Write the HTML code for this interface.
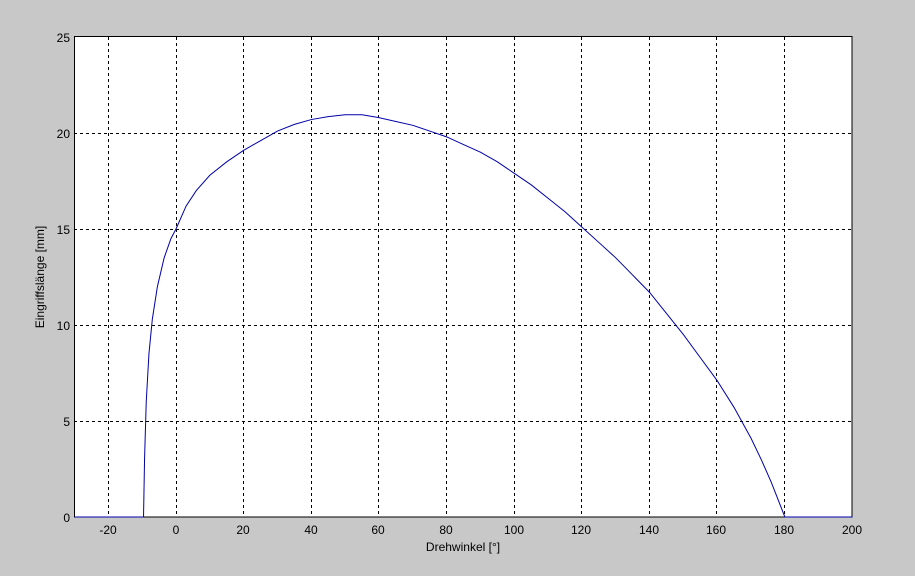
<!DOCTYPE html>
<html><head><style>
html,body{margin:0;padding:0;background:#c8c8c8;}
svg{display:block;}
text{font-family:"Liberation Sans",Arial,sans-serif;font-size:12px;fill:#000;}
</style></head><body>
<svg width="915" height="576" viewBox="0 0 915 576" xmlns="http://www.w3.org/2000/svg">
<rect x="0" y="0" width="915" height="576" fill="#c8c8c8"/>
<rect x="74" y="37" width="778" height="480" fill="#fff"/>
<g stroke="#000" stroke-width="1" stroke-dasharray="3,3" fill="none">
<line x1="108.5" y1="37" x2="108.5" y2="517"/>
<line x1="176.5" y1="37" x2="176.5" y2="517"/>
<line x1="243.5" y1="37" x2="243.5" y2="517"/>
<line x1="311.5" y1="37" x2="311.5" y2="517"/>
<line x1="378.5" y1="37" x2="378.5" y2="517"/>
<line x1="446.5" y1="37" x2="446.5" y2="517"/>
<line x1="514.5" y1="37" x2="514.5" y2="517"/>
<line x1="581.5" y1="37" x2="581.5" y2="517"/>
<line x1="649.5" y1="37" x2="649.5" y2="517"/>
<line x1="716.5" y1="37" x2="716.5" y2="517"/>
<line x1="784.5" y1="37" x2="784.5" y2="517"/>
<line x1="74" y1="421.5" x2="852" y2="421.5"/>
<line x1="74" y1="325.5" x2="852" y2="325.5"/>
<line x1="74" y1="229.5" x2="852" y2="229.5"/>
<line x1="74" y1="133.5" x2="852" y2="133.5"/>
</g>
<rect x="74.5" y="36.5" width="777.5" height="480.5" fill="none" stroke="#000" stroke-width="1"/>
<g transform="translate(176,517) scale(3.3826,-19.2)">
<polyline fill="none" stroke="#0000a8" stroke-width="1" vector-effect="non-scaling-stroke"
points="-30,0 -9.6,0 -9.3,3 -8.8,6 -8,8.5 -7,10.3 -5.5,12 -3.5,13.5 -1.5,14.5 0,15 3,16.2 6,17 10,17.8 15,18.5 20,19.1 25,19.6 30,20.1 35,20.45 40,20.7 45,20.85 50,20.95 55,20.95 60,20.8 65,20.6 70,20.4 75,20.1 80,19.8 85,19.4 90,19 95,18.5 100,17.9 105,17.3 110,16.6 115,15.9 120,15.1 125,14.3 130,13.5 135,12.6 140,11.7 145,10.6 150,9.5 155,8.3 160,7.1 165,5.7 170,4.1 173,3 176,1.8 178,0.9 180,0 200,0"/>
</g>
<g text-anchor="end">
<text x="70" y="42">25</text>
<text x="70" y="138">20</text>
<text x="70" y="234">15</text>
<text x="70" y="330">10</text>
<text x="70" y="426">5</text>
<text x="70" y="522">0</text>
</g>
<g text-anchor="middle">
<text x="108" y="534">-20</text>
<text x="176" y="534">0</text>
<text x="243" y="534">20</text>
<text x="311" y="534">40</text>
<text x="378" y="534">60</text>
<text x="446" y="534">80</text>
<text x="514" y="534">100</text>
<text x="581" y="534">120</text>
<text x="649" y="534">140</text>
<text x="716" y="534">160</text>
<text x="784" y="534">180</text>
<text x="852" y="534">200</text>
<text x="463" y="551">Drehwinkel [°]</text>
<text transform="translate(44,277) rotate(-90)">Eingriffslänge [mm]</text>
</g>
</svg>
</body></html>
